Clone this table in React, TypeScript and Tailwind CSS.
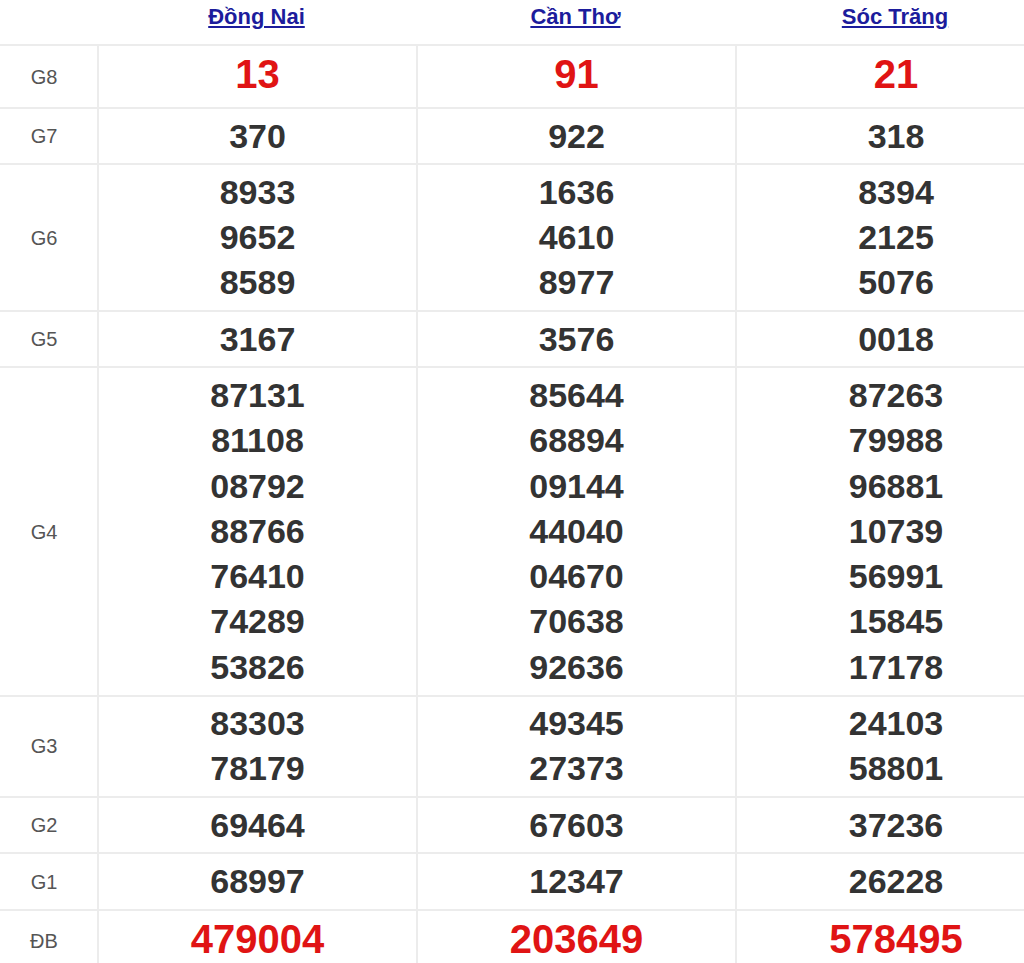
import React from "react";

type Row = {
  label: string;
  values: string[][];
  big?: boolean;
};

const provinces = ["Đồng Nai", "Cần Thơ", "Sóc Trăng"];

const rows: Row[] = [
  { label: "G8", values: [["13"], ["91"], ["21"]], big: true },
  { label: "G7", values: [["370"], ["922"], ["318"]] },
  {
    label: "G6",
    values: [
      ["8933", "9652", "8589"],
      ["1636", "4610", "8977"],
      ["8394", "2125", "5076"],
    ],
  },
  { label: "G5", values: [["3167"], ["3576"], ["0018"]] },
  {
    label: "G4",
    values: [
      ["87131", "81108", "08792", "88766", "76410", "74289", "53826"],
      ["85644", "68894", "09144", "44040", "04670", "70638", "92636"],
      ["87263", "79988", "96881", "10739", "56991", "15845", "17178"],
    ],
  },
  {
    label: "G3",
    values: [
      ["83303", "78179"],
      ["49345", "27373"],
      ["24103", "58801"],
    ],
  },
  { label: "G2", values: [["69464"], ["67603"], ["37236"]] },
  { label: "G1", values: [["68997"], ["12347"], ["26228"]] },
  { label: "ĐB", values: [["479004"], ["203649"], ["578495"]], big: true },
];

const App = () => {
  return (
    <div
      className="w-[1024px] h-[963px] overflow-hidden bg-white"
      style={{ fontFamily: '"Liberation Sans", Arial, sans-serif' }}
    >
      <div className="w-[1055px]">
        {/* header */}
        <div className="grid grid-cols-[97px_319px_319px_320px] h-[44px]">
          <div />
          {provinces.map((p) => (
            <div key={p} className="flex justify-center pt-[3px]">
              <a
                href="#"
                className="text-[22px] leading-[28px] font-bold text-[#1c1c9c] underline underline-offset-2"
              >
                {p}
              </a>
            </div>
          ))}
        </div>

        {rows.map((row) => (
          <div
            key={row.label}
            className="grid grid-cols-[97px_319px_319px_320px] border-t-2 border-[#ececec]"
          >
            <div className="flex items-center justify-center pr-[9px] text-[20px] text-[#555]">
              {row.label}
            </div>
            {row.values.map((col, i) => (
              <div
                key={i}
                className={
                  row.big
                    ? "flex flex-col items-center justify-center border-l-2 border-[#ececec] pt-[3px] pb-[7px] text-[40px] leading-[51px] font-bold text-[#e01414]"
                    : "flex flex-col items-center justify-center border-l-2 border-[#ececec] py-[4.5px] text-[34px] leading-[45.3px] font-bold text-[#333]"
                }
              >
                {col.map((n, j) => (
                  <div key={j}>{n}</div>
                ))}
              </div>
            ))}
          </div>
        ))}
      </div>
    </div>
  );
};

export default App;
